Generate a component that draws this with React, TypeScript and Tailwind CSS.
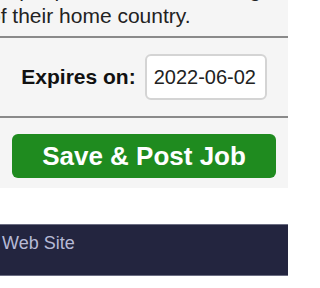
export default function App() {
  return (
    <div className="h-[288px] w-[288px] overflow-hidden bg-white font-['Liberation_Sans',Arial,sans-serif] text-[#222]">
      <div className="bg-[#f5f5f5]">
        <div className="h-[38px] overflow-hidden border-b-2 border-[#8a8a8a]">
          <p className="-ml-[11px] -mt-[23px] whitespace-nowrap text-[21px] leading-[26px] text-[#222]">
            for people who are now living
            <br />
            of their home country.
          </p>
        </div>

        <div className="flex items-center justify-center gap-[9px] border-b-2 border-[#8a8a8a] py-4">
          <label className="text-[21px] font-bold text-[#111]">Expires on:</label>
          <input
            readOnly
            value="2022-06-02"
            className="h-[46px] w-[122px] rounded-[6px] border-2 border-[#d4d4d4] bg-white px-[7px] text-[20px] text-[#222] outline-none"
          />
        </div>

        <div className="px-3 pb-[10px] pt-4">
          <button className="flex h-[44px] w-full items-center justify-center rounded-[6px] bg-[#1f8b1f] text-[26px] font-bold text-white">
            Save &amp; Post Job
          </button>
        </div>
      </div>

      <div className="h-[36px]" />

      <div className="h-[52px] border-t border-b border-[#6b6d82] bg-[#23253f] px-[2px] pt-[7px]">
        <div className="text-[18px] leading-[22px] text-[#b6bad6]">Web Site</div>
      </div>
    </div>
  );
}
